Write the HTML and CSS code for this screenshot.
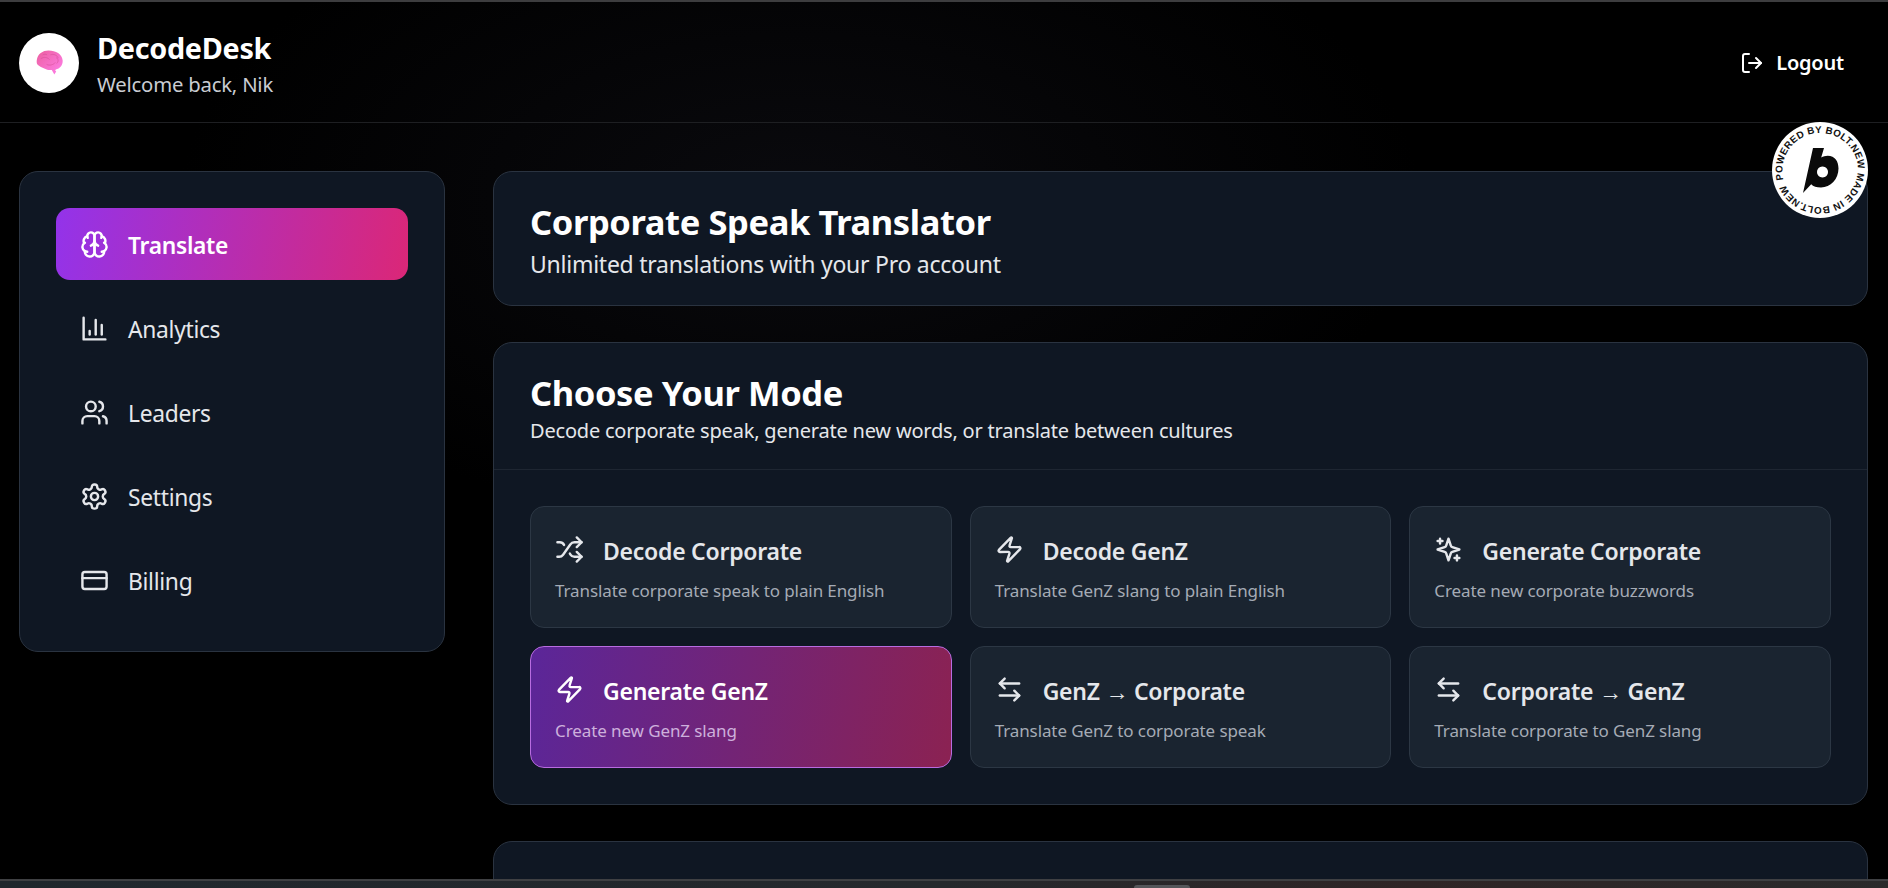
FILE: index.html
```html
<!DOCTYPE html>
<html lang="en">
<head>
<meta charset="utf-8">
<title>DecodeDesk</title>
<link rel="stylesheet" href="styles.css">
</head>
<body>
<svg class="sprite" width="0" height="0" aria-hidden="true">
  <defs>
    <symbol id="i-brain" viewBox="0 0 24 24"><path d="M12 5a3 3 0 1 0-5.997.125 4 4 0 0 0-2.526 5.77 4 4 0 0 0 .556 6.588A4 4 0 1 0 12 18Z"/><path d="M12 5a3 3 0 1 1 5.997.125 4 4 0 0 1 2.526 5.77 4 4 0 0 1-.556 6.588A4 4 0 1 1 12 18Z"/><path d="M15 13a4.5 4.5 0 0 1-3-4 4.5 4.5 0 0 1-3 4"/><path d="M17.599 6.5a3 3 0 0 0 .399-1.375"/><path d="M6.003 5.125A3 3 0 0 0 6.401 6.5"/><path d="M3.477 10.896a4 4 0 0 1 .585-.396"/><path d="M19.938 10.5a4 4 0 0 1 .585.396"/><path d="M6 18a4 4 0 0 1-1.967-.516"/><path d="M19.967 17.484A4 4 0 0 1 18 18"/></symbol>
    <symbol id="i-chart" viewBox="0 0 24 24"><path d="M3 3v18h18"/><path d="M18 17V9"/><path d="M13 17V5"/><path d="M8 17v-3"/></symbol>
    <symbol id="i-users" viewBox="0 0 24 24"><path d="M16 21v-2a4 4 0 0 0-4-4H6a4 4 0 0 0-4 4v2"/><circle cx="9" cy="7" r="4"/><path d="M22 21v-2a4 4 0 0 0-3-3.87"/><path d="M16 3.13a4 4 0 0 1 0 7.75"/></symbol>
    <symbol id="i-settings" viewBox="0 0 24 24"><path d="M12.22 2h-.44a2 2 0 0 0-2 2v.18a2 2 0 0 1-1 1.73l-.43.25a2 2 0 0 1-2 0l-.15-.08a2 2 0 0 0-2.73.73l-.22.38a2 2 0 0 0 .73 2.73l.15.1a2 2 0 0 1 1 1.72v.51a2 2 0 0 1-1 1.74l-.15.09a2 2 0 0 0-.73 2.73l.22.38a2 2 0 0 0 2.73.73l.15-.08a2 2 0 0 1 2 0l.43.25a2 2 0 0 1 1 1.73V20a2 2 0 0 0 2 2h.44a2 2 0 0 0 2-2v-.18a2 2 0 0 1 1-1.73l.43-.25a2 2 0 0 1 2 0l.15.08a2 2 0 0 0 2.73-.73l.22-.39a2 2 0 0 0-.73-2.73l-.15-.08a2 2 0 0 1-1-1.74v-.5a2 2 0 0 1 1-1.74l.15-.09a2 2 0 0 0 .73-2.73l-.22-.38a2 2 0 0 0-2.73-.73l-.15.08a2 2 0 0 1-2 0l-.43-.25a2 2 0 0 1-1-1.73V4a2 2 0 0 0-2-2z"/><circle cx="12" cy="12" r="3"/></symbol>
    <symbol id="i-card" viewBox="0 0 24 24"><rect width="20" height="14" x="2" y="5" rx="2"/><line x1="2" x2="22" y1="10" y2="10"/></symbol>
    <symbol id="i-shuffle" viewBox="0 0 24 24"><path d="M2 18h1.4c1.3 0 2.5-.6 3.3-1.7l6.1-8.6c.7-1.1 2-1.7 3.3-1.7H22"/><path d="m18 2 4 4-4 4"/><path d="M2 6h1.9c1.5 0 2.9.9 3.6 2.2"/><path d="M22 18h-5.9c-1.3 0-2.6-.7-3.3-1.8l-.5-.8"/><path d="m18 14 4 4-4 4"/></symbol>
    <symbol id="i-zap" viewBox="0 0 24 24"><path d="M4 14a1 1 0 0 1-.78-1.63l9.9-10.2a.5.5 0 0 1 .86.46l-1.92 6.02A1 1 0 0 0 13 10h7a1 1 0 0 1 .78 1.63l-9.9 10.2a.5.5 0 0 1-.86-.46l1.92-6.02A1 1 0 0 0 11 14z"/></symbol>
    <symbol id="i-sparkles" viewBox="0 0 24 24"><path d="m12 3-1.912 5.813a2 2 0 0 1-1.275 1.275L3 12l5.813 1.912a2 2 0 0 1 1.275 1.275L12 21l1.912-5.813a2 2 0 0 1 1.275-1.275L21 12l-5.813-1.912a2 2 0 0 1-1.275-1.275L12 3Z"/><path d="M5 3v4"/><path d="M19 17v4"/><path d="M3 5h4"/><path d="M17 19h4"/></symbol>
    <symbol id="i-swap" viewBox="0 0 24 24"><path d="M8 3 4 7l4 4"/><path d="M4 7h16"/><path d="m16 21 4-4-4-4"/><path d="M20 17H4"/></symbol>
    <symbol id="i-logout" viewBox="0 0 24 24"><path d="M9 21H5a2 2 0 0 1-2-2V5a2 2 0 0 1 2-2h4"/><polyline points="16 17 21 12 16 7"/><line x1="21" x2="9" y1="12" y2="12"/></symbol>
  </defs>
</svg>

<div class="app">
  <div class="topline"></div>
  <header class="header">
    <div class="brand">
      <div class="avatar">
        <svg class="brain-art" viewBox="0 0 28 26" aria-hidden="true">
          <defs>
            <linearGradient id="brainGrad" x1="0" y1="0" x2="1" y2="1">
              <stop offset="0" stop-color="#ec5f9f"/>
              <stop offset="1" stop-color="#ff7fea"/>
            </linearGradient>
          </defs>
          <path fill="url(#brainGrad)" d="M.8 10.500C1.500 4 7 .5 13 .5c7.500 0 14.200 3.500 14.700 10.500.3 5-3 8.500-7.200 9.300l-.6 1.400 1.100.7-2 3.100-2.600-4.700c-2.900.4-5.300-.2-7.200-1.400C6 18.500 2.800 16.500 1.200 14.800.6 13.500.6 12 .8 10.500Z"/>
          <path fill="none" stroke="#d8549d" stroke-width=".7" d="M5 9c3-2 7-1.500 9 1M15 5c3-1 7 0 8 3.500M11 15c3 1.500 7 .5 9-2M21 8c2.500 1 2.500 4 .5 6M7 5c1.500-.8 3-.8 4.500 0"/>
        </svg>
      </div>
      <div class="brand-text">
        <div class="brand-name">DecodeDesk</div>
        <div class="brand-sub">Welcome back, Nik</div>
      </div>
    </div>
    <button class="logout"><svg class="icon-logout"><use href="#i-logout"/></svg><span>Logout</span></button>
  </header>

  <svg class="bolt-badge" viewBox="0 0 96 96" role="img" aria-label="Powered by Bolt.new">
    <circle cx="48" cy="48" r="48" fill="#fff"/>
    <defs><path id="badgeCircle" d="M11.300 57.800A38 38 0 0 1 84.700 38.200A38 38 0 0 1 11.300 57.800"/></defs>
    <text class="bolt-ring"><textPath href="#badgeCircle" textLength="229" lengthAdjust="spacing">POWERED BY BOLT.NEW MADE IN BOLT.NEW</textPath></text>
    <path fill="#0a0a0a" fill-rule="evenodd" d="M41 26h11l-2.800 9.500c2-1 4.200-1.700 6.500-1.700 7.300 0 10.800 5.700 10.800 12.700 0 10.500-8 19-17.500 19-4.500 0-7.800-1.100-9.800-3.200L31 71ZM50.500 44.500a5.500 5.500 0 1 0 .01 0Z"/>
  </svg>

  <div class="layout">
    <aside class="sidebar">
      <a class="nav-item active"><svg class="icon"><use href="#i-brain"/></svg><span>Translate</span></a>
      <a class="nav-item"><svg class="icon"><use href="#i-chart"/></svg><span>Analytics</span></a>
      <a class="nav-item"><svg class="icon"><use href="#i-users"/></svg><span>Leaders</span></a>
      <a class="nav-item"><svg class="icon"><use href="#i-settings"/></svg><span>Settings</span></a>
      <a class="nav-item"><svg class="icon"><use href="#i-card"/></svg><span>Billing</span></a>
    </aside>

    <main class="main">
      <section class="panel">
        <div class="panel-head plain">
          <h1 class="panel-title">Corporate Speak Translator</h1>
          <p class="panel-lead">Unlimited translations with your Pro account</p>
        </div>
      </section>

      <section class="panel">
        <div class="panel-head">
          <h2 class="panel-title">Choose Your Mode</h2>
          <p class="panel-sub">Decode corporate speak, generate new words, or translate between cultures</p>
        </div>
        <div class="mode-grid">
          <button class="mode">
            <span class="mode-top"><svg class="icon"><use href="#i-shuffle"/></svg><span class="mode-name">Decode Corporate</span></span>
            <span class="mode-desc">Translate corporate speak to plain English</span>
          </button>
          <button class="mode">
            <span class="mode-top"><svg class="icon"><use href="#i-zap"/></svg><span class="mode-name">Decode GenZ</span></span>
            <span class="mode-desc">Translate GenZ slang to plain English</span>
          </button>
          <button class="mode">
            <span class="mode-top"><svg class="icon"><use href="#i-sparkles"/></svg><span class="mode-name">Generate Corporate</span></span>
            <span class="mode-desc">Create new corporate buzzwords</span>
          </button>
          <button class="mode selected">
            <span class="mode-top"><svg class="icon"><use href="#i-zap"/></svg><span class="mode-name">Generate GenZ</span></span>
            <span class="mode-desc">Create new GenZ slang</span>
          </button>
          <button class="mode">
            <span class="mode-top"><svg class="icon"><use href="#i-swap"/></svg><span class="mode-name">GenZ → Corporate</span></span>
            <span class="mode-desc">Translate GenZ to corporate speak</span>
          </button>
          <button class="mode">
            <span class="mode-top"><svg class="icon"><use href="#i-swap"/></svg><span class="mode-name">Corporate → GenZ</span></span>
            <span class="mode-desc">Translate corporate to GenZ slang</span>
          </button>
        </div>
      </section>

      <section class="panel">
        <div class="panel-head tight">
          <h2 class="panel-title with-icon"><svg class="icon-large"><use href="#i-zap"/></svg>Generate GenZ</h2>
        </div>
      </section>
    </main>
  </div>

  <div class="bottom-strip"><span class="strip-tab"></span></div>
</div>
</body>
</html>
```
FILE: styles.css
```css
* { box-sizing: border-box; }

html, body { margin: 0; padding: 0; height: 100%; background: #000; }

body { font-family: "Noto Sans", "Open Sans", "Liberation Sans", sans-serif; color: #fff; overflow: hidden; }

.sprite { position: absolute; }

svg use, .icon, .icon-logout, .icon-large {
  fill: none;
  stroke: currentColor;
  stroke-width: 2;
  stroke-linecap: round;
  stroke-linejoin: round;
}

.app {
  position: relative;
  height: 888px;
  overflow: hidden;
  background: radial-gradient(ellipse 620px 330px at 800px 200px, #0a0a0e, #000);
}

.topline { height: 2px; background: #3d3d3f; }

.header {
  height: 121px;
  padding: 30px 44px 29px 19px;
  display: flex;
  align-items: center;
  justify-content: space-between;
  border-bottom: 1px solid #1e1f22;
}

.brand { display: flex; align-items: center; gap: 18px; }

.avatar {
  width: 60px;
  height: 60px;
  border-radius: 50%;
  background: #fff;
  display: flex;
  align-items: center;
  justify-content: center;
}

.brain-art { width: 27px; height: 25px; }

.brand-text { padding-top: 3px; }

.brand-name { font-size: 28.800px; line-height: 34px; font-weight: 700; letter-spacing: -.3px; margin-bottom: 6px; }

.brand-sub { font-size: 20.300px; line-height: 26px; color: #c9ccd2; letter-spacing: -.2px; }

.logout {
  display: flex;
  align-items: center;
  gap: 12px;
  padding: 0;
  border: 0;
  background: none;
  color: #fff;
  font: 600 20px/26px "Noto Sans", sans-serif;
  letter-spacing: -.2px;
}

.icon-logout { width: 24px; height: 24px; }

.bolt-badge { position: absolute; top: 122px; right: 20px; width: 96px; height: 96px; z-index: 3; }

.bolt-ring { font: 600 9.800px "Liberation Sans", sans-serif; fill: #111; }

.layout {
  display: grid;
  grid-template-columns: 426px 1fr;
  gap: 48px;
  padding: 48px 20px 0 19px;
  align-items: start;
}

.sidebar {
  display: flex;
  flex-direction: column;
  gap: 12px;
  padding: 36px 36px 35px;
  background: #0f1723;
  border: 1px solid #2a3340;
  border-radius: 19px;
}

.nav-item {
  height: 72px;
  padding: 0 24px;
  display: flex;
  align-items: center;
  gap: 19px;
  border-radius: 14px;
  font-size: 22.800px;
  color: #e5e7eb;
  letter-spacing: -.3px;
}

.nav-item span { margin-top: 2px; }

.nav-item.active {
  background: linear-gradient(100deg, #9333ea, #db2777);
  color: #fff;
  font-weight: 600;
}

.icon { width: 29px; height: 29px; flex: none; }

.main { display: flex; flex-direction: column; gap: 36px; }

.panel {
  background: #0f1723;
  border: 1px solid #2a3340;
  border-radius: 19px;
}

.panel-head { padding: 28px 36px 25px; border-bottom: 1px solid #1e2632; }

.panel-head.plain { border-bottom: 0; padding-bottom: 26px; }

.panel-head.tight { padding-top: 25px; }

.panel-title { margin: 0; font-size: 34.500px; line-height: 43px; font-weight: 700; letter-spacing: -.4px; }

.with-icon { display: flex; align-items: center; gap: 21px; }

.icon-large { width: 35px; height: 35px; flex: none; margin-top: 14px; }

.panel-lead { margin: 6px 0 0; font-size: 23px; line-height: 30px; color: #e5e7eb; letter-spacing: -.25px; }

.panel-sub { margin: 4px 0 0; font-size: 20px; line-height: 26px; color: #e5e7eb; letter-spacing: -.2px; }

.mode-grid {
  display: grid;
  grid-template-columns: repeat(3, 1fr);
  gap: 18px;
  padding: 36px;
}

.mode {
  height: 122px;
  padding: 28px 24px 24px;
  display: flex;
  flex-direction: column;
  align-items: flex-start;
  gap: 15px;
  text-align: left;
  font-family: inherit;
  background: #1a2430;
  border: 1px solid #2c3744;
  border-radius: 14px;
  color: #e5e7eb;
}

.mode-top { display: flex; align-items: center; gap: 19px; height: 29px; }

.mode-name { font-size: 23px; line-height: 29px; font-weight: 600; letter-spacing: -.25px; margin-top: 3px; }

.mode-desc { font-size: 17px; line-height: 24px; color: #a5abb5; letter-spacing: -.1px; }

.mode.selected {
  background: linear-gradient(100deg, #5b2699, #8b2252);
  border-color: #b86ce0;
  color: #fff;
}

.mode.selected .mode-desc { color: #cdb0dc; }

.bottom-strip {
  position: absolute;
  left: 0;
  right: 0;
  bottom: 0;
  height: 9px;
  border-top: 2px solid #3f4043;
  background: linear-gradient(90deg, #20272d 0%, #25282c 50%, #2f2526 75%, #2a2a2b 100%);
}

.strip-tab {
  position: absolute;
  left: 1134px;
  bottom: 0;
  width: 56px;
  height: 3px;
  border-radius: 3px 3px 0 0;
  background: #55565a;
}
```
